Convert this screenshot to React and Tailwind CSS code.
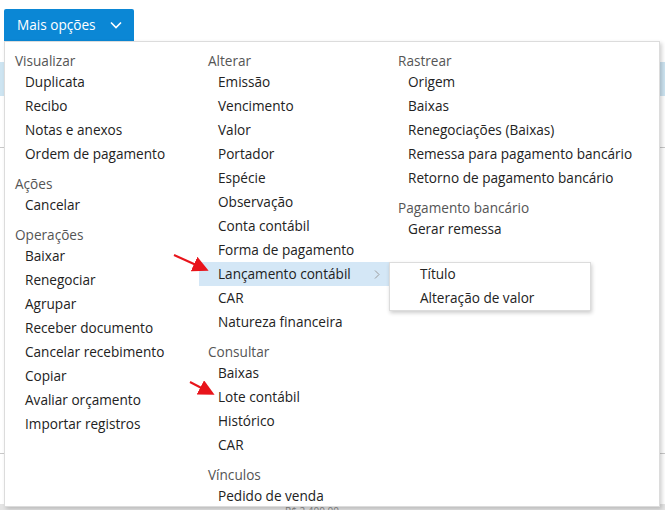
import React from "react";

const columns = [
  [
    { title: "Visualizar", items: ["Duplicata", "Recibo", "Notas e anexos", "Ordem de pagamento"] },
    { title: "Ações", items: ["Cancelar"] },
    {
      title: "Operações",
      items: [
        "Baixar",
        "Renegociar",
        "Agrupar",
        "Receber documento",
        "Cancelar recebimento",
        "Copiar",
        "Avaliar orçamento",
        "Importar registros",
      ],
    },
  ],
  [
    {
      title: "Alterar",
      items: [
        "Emissão",
        "Vencimento",
        "Valor",
        "Portador",
        "Espécie",
        "Observação",
        "Conta contábil",
        "Forma de pagamento",
        "Lançamento contábil",
        "CAR",
        "Natureza financeira",
      ],
    },
    { title: "Consultar", items: ["Baixas", "Lote contábil", "Histórico", "CAR"] },
    { title: "Vínculos", items: ["Pedido de venda"] },
  ],
  [
    {
      title: "Rastrear",
      items: [
        "Origem",
        "Baixas",
        "Renegociações (Baixas)",
        "Remessa para pagamento bancário",
        "Retorno de pagamento bancário",
      ],
    },
    { title: "Pagamento bancário", items: ["Gerar remessa"] },
  ],
];

function Arrow({ x1, y1, x2, y2 }) {
  return (
    <svg className="absolute left-0 top-0 pointer-events-none" width="665" height="510">
      <defs>
        <marker id="head" markerWidth="8" markerHeight="8" refX="6" refY="4" orient="auto">
          <path d="M0,0 L8,4 L0,8 Z" fill="#e8141b" />
        </marker>
      </defs>
      <line x1={x1} y1={y1} x2={x2} y2={y2} stroke="#e8141b" strokeWidth="2" markerEnd="url(#head)" />
    </svg>
  );
}

export default function App() {
  return (
    <div
      className="relative flex h-[510px] w-[665px] flex-col overflow-hidden bg-white text-[13.6px]"
      style={{ fontFamily: '"Open Sans", "Noto Sans", sans-serif' }}
    >
      {/* toolbar */}
      <div className="flex pl-[4px] pt-[9px]">
        <button className="flex h-[32px] w-[130px] items-center rounded-t-[2px] bg-[#0b87d5] pl-[13px] pr-[12px] text-[13.6px] text-white">
          <span>Mais opções</span>
          <svg className="ml-auto" width="12" height="8" viewBox="0 0 12 8">
            <path d="M1 1.5 L6 6.5 L11 1.5" fill="none" stroke="white" strokeWidth="1.6" />
          </svg>
        </button>
      </div>

      {/* background table peeking behind the menu */}
      <div className="flex flex-1 flex-col">
        <div className="h-[21px]" />
        <div className="h-[34px] bg-[#cde4f1]" />
        <div className="h-[52px] border-b border-[#c8c8c8]" />
        <div className="h-[306px] border-b border-[#c8c8c8]" />
        <div className="flex-1" />
        <div className="h-[6px] overflow-hidden bg-[#e4e4e4] pl-[285px] pt-[1px] text-[10px] leading-[12px] text-[#888]">
          R$ 2.400,00
        </div>
      </div>

      {/* dropdown menu overlay */}
      <div className="absolute left-[4px] top-[41px] grid h-[466px] w-[656px] grid-cols-[194px_190px_1fr] border border-[#dcdcdc] bg-white pt-[10px] shadow-[2px_2px_4px_rgba(0,0,0,0.18)]">
        {columns.map((col, ci) => (
          <div key={ci} className="flex flex-col">
            {col.map((group, gi) => (
              <div key={gi} className={gi > 0 ? "mt-[9px]" : ""}>
                <div className={`flex h-[18px] items-center text-[#555] ${ci === 0 ? "pl-[10px]" : "pl-[9px]"}`}>
                  {group.title}
                </div>
                {group.items.map((item) => {
                  const active = ci === 1 && item === "Lançamento contábil";
                  return (
                    <div
                      key={item}
                      className={`relative flex h-[24px] items-center text-[#222] ${
                        ci === 0 ? "pl-[20px]" : "pl-[19px]"
                      } ${active ? "bg-[#d4e7f6]" : ""}`}
                    >
                      {item}
                      {active && (
                        <svg className="absolute right-[9px] top-[8px]" width="6" height="9" viewBox="0 0 6 9">
                          <path d="M1 0.5 L5 4.5 L1 8.5" fill="none" stroke="#9a9a9a" strokeWidth="1" />
                        </svg>
                      )}
                      {active && (
                        <div className="absolute left-[190px] top-0 flex w-[202px] flex-col border border-[#dcdcdc] bg-white shadow-[1px_2px_4px_rgba(0,0,0,0.2)]">
                          <div className="flex h-[23px] items-center pl-[30px] text-[#222]">Título</div>
                          <div className="flex h-[24px] items-center pl-[30px] text-[#222]">Alteração de valor</div>
                        </div>
                      )}
                    </div>
                  );
                })}
              </div>
            ))}
          </div>
        ))}
      </div>

      <Arrow x1={174} y1={255} x2={205} y2={269} />
      <Arrow x1={190} y1={382} x2={211} y2={393} />
    </div>
  );
}
